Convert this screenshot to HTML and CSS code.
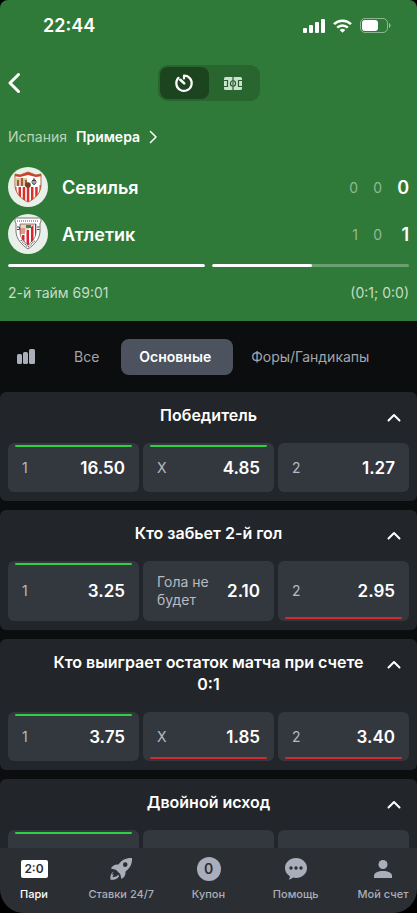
FILE: index.html
```
<!DOCTYPE html>
<html lang="ru">

<head>
    <meta charset="UTF-8">
    <meta name="viewport" content="width=device-width, initial-scale=1.0">
    <title>Севилья - Атлетик</title>
    <link rel="stylesheet" href="styles.css">
</head>

<body>
    <div class="app">
        <header class="match">
            <div class="status">
                <span class="clock">22:44</span>
                <div class="status-icons">
                    <svg width="22" height="14" viewBox="0 0 22 14" fill="#fff">
                        <rect x="0" y="9" width="4" height="5" rx="1" />
                        <rect x="6" y="6" width="4" height="8" rx="1" />
                        <rect x="12" y="3" width="4" height="11" rx="1" />
                        <rect x="18" y="0" width="4" height="14" rx="1" />
                    </svg>
                    <svg width="19" height="14" viewBox="0 0 19 14" fill="none" stroke="#fff" stroke-width="2.5">
                        <path d="M1 5.2a12.2 12.2 0 0 1 17 0" />
                        <path d="M4.2 8.6a7.6 7.6 0 0 1 10.6 0" />
                        <path d="M9.5 13.8L6.7 11a4 4 0 0 1 5.6 0z" fill="#fff" stroke="none" />
                    </svg>
                    <svg width="31" height="15" viewBox="0 0 31 15">
                        <rect x=".5" y=".5" width="27" height="14" rx="4.5" fill="none" stroke="#fff" stroke-opacity=".45" />
                        <rect x="2" y="2" width="16" height="11" rx="3" fill="#fff" />
                        <path d="M29 5c2 .8 2 4.2 0 5z" fill="#fff" fill-opacity=".5" />
                    </svg>
                </div>
            </div>

            <div class="topbar">
                <button class="back" type="button" aria-label="Назад">
                    <svg width="14" height="22" viewBox="0 0 14 22" fill="none" stroke="#fff" stroke-width="3" stroke-linecap="round" stroke-linejoin="round">
                        <path d="M10.500 2.500L2 11l8.500 8.500" />
                    </svg>
                </button>
                <div class="switch">
                    <button class="switch-item active" type="button" aria-label="Счет">
                        <svg width="20" height="20" viewBox="0 0 20 20" fill="none" stroke="#fff" stroke-width="2.2" stroke-linecap="round" stroke-linejoin="round">
                            <path d="M10 5.500V2.500A7.700 7.700 0 1 1 4.500 4.800" />
                            <path d="M6.300 6.800l3.900 3.600" stroke-width="2.6" />
                        </svg>
                    </button>
                    <button class="switch-item" type="button" aria-label="Поле">
                        <svg width="18" height="13" viewBox="0 0 18 13">
                            <rect width="18" height="13" rx="1.5" fill="#cfe0d0" />
                            <g fill="none" stroke="#25602c" stroke-width="1.2">
                                <path d="M9 0v13" />
                                <circle cx="9" cy="6.5" r="2.6" fill="#cfe0d0" />
                                <path d="M9 5v3M0 3.500h3.500v6H0M18 3.500h-3.500v6H18" />
                            </g>
                        </svg>
                    </button>
                </div>
            </div>

            <a class="league" href="#">
                <span class="country">Испания</span>
                <span class="tournament">Примера</span>
                <svg width="8" height="14" viewBox="0 0 8 14" fill="none" stroke="#fff" stroke-width="1.5" stroke-linecap="round" stroke-linejoin="round">
                    <path d="M1.500 1.500L7 7l-5.500 5.500" />
                </svg>
            </a>

            <div class="teams">
                <div class="team">
                    <span class="crest">
                        <svg width="28" height="32" viewBox="0 0 28 32">
                            <defs>
                                <clipPath id="sev">
                                    <path d="M1 3l5 1 8-3 8 3 5-1v11c0 8-6 14-13 17C7 28 1 22 1 14z" />
                                </clipPath>
                            </defs>
                            <g clip-path="url(#sev)">
                                <path d="M0 0h28v32H0z" fill="#fff" />
                                <path d="M0 0h28v5l-6 1-8-2-8 2-6-1z" fill="#d8352b" />
                                <path d="M4.500 16H7v15H4.500zM8.700 16h2.500v15H8.700zM12.800 16h2.500v16h-2.500zM17 16h2.500v15H17zM21.200 16h2.500v12h-2.500zM0 16h2.500v9H0zM25.500 14H28v9h-2.500z" fill="#d9302c" />
                                <path d="M2 7h11v8H2z" fill="#e2c4a0" />
                                <path d="M3 15V9h2v6M7 15V7h2v8M11 15v-6h2v6" fill="#9a5c3c" />
                            </g>
                            <path d="M18 9.500h4M20 7v7m-2-3c0 3 4 3 4 0s-4-3-4 0" fill="none" stroke="#444" />
                            <circle cx="14" cy="14" r="2.8" fill="#75401e" />
                            <path d="M1 3l5 1 8-3 8 3 5-1v11c0 8-6 14-13 17C7 28 1 22 1 14z" fill="none" stroke="#b06a37" />
                        </svg>
                    </span>
                    <span class="name">Севилья</span>
                    <span class="period">0</span>
                    <span class="period">0</span>
                    <span class="total">0</span>
                </div>
                <div class="team">
                    <span class="crest">
                        <svg width="28" height="34" viewBox="0 0 28 34">
                            <defs>
                                <clipPath id="ath">
                                    <path d="M6 7h16v8c0 5-3 9-8 13-5-4-8-8-8-13z" />
                                </clipPath>
                            </defs>
                            <path d="M1 1h26v4l-1 1v8c0 8-6 14-12 18C8 28 2 22 2 14V6L1 5z" fill="#fff" stroke="#555" stroke-width=".8" />
                            <path d="M3 4h22" stroke="#888" stroke-width="1.5" stroke-dasharray="1 1" />
                            <path d="M3 10h2.500v2.500H3m20-2.500h2.500m-2.500 2.500h2.500" fill="none" stroke="#444" />
                            <g clip-path="url(#ath)">
                                <path d="M6 7h16v22H6z" fill="#fff" />
                                <path d="M8 18h2.500v10H8zM12.500 13H15v16h-2.500zM17 8h2.500v18H17zM21 7h1v14h-1z" fill="#d9232e" />
                                <path d="M6 7h15L6 19z" fill="#e8d5c4" />
                                <path d="M6 11h5v6H6z" fill="#dc9b88" />
                                <path d="M12 8h5v3h-5z" fill="#438249" />
                            </g>
                            <path d="M6 7h16v8c0 5-3 9-8 13-5-4-8-8-8-13z" fill="none" stroke="#5a3434" stroke-width=".6" />
                            <path d="M7 23c2 3 4 4 7 7 3-3 5-4 7-7" fill="none" stroke="#666" stroke-width="1.5" stroke-dasharray="1 1" />
                        </svg>
                    </span>
                    <span class="name">Атлетик</span>
                    <span class="period">1</span>
                    <span class="period">0</span>
                    <span class="total">1</span>
                </div>
            </div>

            <div class="halves">
                <div class="half"><div class="half-fill" style="width: 100%"></div></div>
                <div class="half"><div class="half-fill" style="width: 51%"></div></div>
            </div>

            <div class="timing">
                <span>2-й тайм 69:01</span>
                <span>(0:1; 0:0)</span>
            </div>
        </header>

        <nav class="tabs">
            <button class="stats" type="button" aria-label="Статистика">
                <svg width="20" height="16" viewBox="0 0 20 16" fill="#a9aeba">
                    <rect x="1" y="5" width="5" height="10" rx="1.5" />
                    <rect x="7" y="3" width="5" height="12" rx="1.5" />
                    <rect x="13" y="0" width="6" height="15" rx="1.5" />
                </svg>
            </button>
            <button class="tab" type="button">Все</button>
            <button class="tab active" type="button">Основные</button>
            <button class="tab" type="button">Форы/Гандикапы</button>
        </nav>

        <main class="markets">
            <section class="market">
                <div class="market-head">
                    <h2>Победитель</h2>
                    <button class="collapse" type="button" aria-label="Свернуть">
                        <svg width="14" height="9" viewBox="0 0 14 9"><path d="M1.500 7.500L7 2l5.500 5.500" /></svg>
                    </button>
                </div>
                <div class="outcomes">
                    <button class="outcome up" type="button"><span>1</span><b>16.50</b></button>
                    <button class="outcome up" type="button"><span>X</span><b>4.85</b></button>
                    <button class="outcome" type="button"><span>2</span><b>1.27</b></button>
                </div>
            </section>

            <section class="market">
                <div class="market-head">
                    <h2>Кто забьет 2-й гол</h2>
                    <button class="collapse" type="button" aria-label="Свернуть">
                        <svg width="14" height="9" viewBox="0 0 14 9"><path d="M1.500 7.500L7 2l5.500 5.500" /></svg>
                    </button>
                </div>
                <div class="outcomes">
                    <button class="outcome up" type="button"><span>1</span><b>3.25</b></button>
                    <button class="outcome" type="button"><span>Гола не будет</span><b>2.10</b></button>
                    <button class="outcome down" type="button"><span>2</span><b>2.95</b></button>
                </div>
            </section>

            <section class="market">
                <div class="market-head">
                    <h2>Кто выиграет остаток матча при счете 0:1</h2>
                    <button class="collapse" type="button" aria-label="Свернуть">
                        <svg width="14" height="9" viewBox="0 0 14 9"><path d="M1.500 7.500L7 2l5.500 5.500" /></svg>
                    </button>
                </div>
                <div class="outcomes">
                    <button class="outcome up" type="button"><span>1</span><b>3.75</b></button>
                    <button class="outcome down" type="button"><span>X</span><b>1.85</b></button>
                    <button class="outcome down" type="button"><span>2</span><b>3.40</b></button>
                </div>
            </section>

            <section class="market">
                <div class="market-head">
                    <h2>Двойной исход</h2>
                    <button class="collapse" type="button" aria-label="Свернуть">
                        <svg width="14" height="9" viewBox="0 0 14 9"><path d="M1.500 7.500L7 2l5.500 5.500" /></svg>
                    </button>
                </div>
                <div class="outcomes">
                    <button class="outcome up" type="button"></button>
                    <button class="outcome" type="button"></button>
                    <button class="outcome" type="button"></button>
                </div>
            </section>
        </main>

        <nav class="bottom">
            <a class="bottom-item active" href="#">
                <span class="score-icon">2:0</span>
                <span>Пари</span>
            </a>
            <a class="bottom-item" href="#">
                <svg width="24" height="24" viewBox="0 0 24 24" fill="#a9aeba">
                    <path fill-rule="evenodd" d="M23 1c.3 6-1.800 10-6.500 13.500.3 3-.8 5.500-4 7.500l-1.300-5-4.400-4.300-5-1.200c2-3.300 4.500-4.500 7.700-4C13 2.700 17 .7 23 1zm-6.800 4.300a2.300 2.300 0 1 0 .1 4.600 2.300 2.300 0 0 0-.1-4.600z" />
                    <path d="M4.800 14.500l-2.300 3.300 2.300-.6-1.500 3 4-.8 2.200-2 .4 2c-1.400 2.600-4 3.400-8.400 3.300-.5-4 .5-7 3.300-8.200z" />
                </svg>
                <span>Ставки 24/7</span>
            </a>
            <a class="bottom-item" href="#">
                <span class="coupon-icon">0</span>
                <span>Купон</span>
            </a>
            <a class="bottom-item" href="#">
                <svg width="24" height="24" viewBox="0 0 24 24">
                    <path d="M12 1c6.300 0 11 4.500 11 10s-4.700 10-11 10c-1 0-2-.1-3-.4-1 1-2.200 1.800-4.200 2.200.8-1.200 1.100-2.400 1-3.600C2.700 17.300 1 14.500 1 11 1 5.500 5.700 1 12 1z" fill="#a9aeba" />
                    <g fill="#2b2e33">
                        <circle cx="7" cy="11" r="1.7" />
                        <circle cx="12" cy="11" r="1.7" />
                        <circle cx="17" cy="11" r="1.7" />
                    </g>
                </svg>
                <span>Помощь</span>
            </a>
            <a class="bottom-item" href="#">
                <svg width="24" height="24" viewBox="0 0 24 24" fill="#a9aeba">
                    <circle cx="12" cy="7.5" r="4.5" />
                    <path d="M3 21v-2c0-3.500 4-5 9-5s9 1.500 9 5v2z" />
                </svg>
                <span>Мой счет</span>
            </a>
        </nav>
    </div>
</body>

</html>
```
FILE: styles.css
```
* {
    box-sizing: border-box;
}

body {
    margin: 0;
    background-color: #000;
    color: #fff;
    font-family: Inter, "Liberation Sans", sans-serif;
}

button {
    padding: 0;
    border: none;
    background: none;
    color: inherit;
    font: inherit;
    cursor: pointer;
}

a {
    color: inherit;
    text-decoration: none;
}

svg {
    display: block;
    flex: none;
}

.app {
    display: flex;
    flex-direction: column;
    height: 100vh;
    overflow: hidden;
    background-color: #0c0d0f;
    border-radius: 8px 8px 24px 24px;
}

/* match header */
.match {
    flex: none;
    padding: 0 8px 18px;
    background-color: #2f7a38;
}

.status {
    display: flex;
    align-items: center;
    justify-content: space-between;
    height: 51px;
    padding: 0 18px 0 35px;
}

.clock {
    font-size: 18px;
    font-weight: 600;
}

.status-icons {
    display: flex;
    align-items: center;
    gap: 8px;
}

.topbar {
    display: grid;
    grid-template-columns: 1fr auto 1fr;
    align-items: center;
    margin-top: 14px;
}

.back {
    justify-self: start;
}

.switch {
    display: flex;
    padding: 2px;
    border-radius: 10px;
    background-color: #28652f;
}

.switch-item {
    display: flex;
    align-items: center;
    justify-content: center;
    width: 49px;
    height: 32px;
    border-radius: 8px;
}

.switch-item.active {
    background-color: #1b441f;
}

.league {
    display: flex;
    align-items: center;
    gap: 9px;
    margin-top: 26px;
    font-size: 14px;
    line-height: 20px;
}

.country {
    color: #b9d4bb;
}

.tournament {
    font-weight: 600;
}

.teams {
    display: grid;
    gap: 7px;
    margin-top: 20px;
}

.team {
    display: flex;
    align-items: center;
}

.crest {
    display: flex;
    align-items: center;
    justify-content: center;
    width: 40px;
    height: 40px;
    margin-right: 14px;
    border-radius: 50%;
    background-color: #e9f0e9;
}

.name {
    flex: 1;
    font-size: 18px;
    font-weight: 600;
}

.period {
    width: 24px;
    text-align: right;
    font-size: 14px;
    color: #8fb993;
}

.total {
    width: 27px;
    text-align: right;
    font-size: 18px;
    font-weight: 600;
}

.halves {
    display: grid;
    grid-template-columns: 1fr 1fr;
    gap: 7px;
    margin-top: 10px;
}

.half {
    height: 3px;
    border-radius: 2px;
    background-color: #6ba071;
    overflow: hidden;
}

.half-fill {
    height: 100%;
    border-radius: 2px;
    background-color: #fff;
}

.timing {
    display: flex;
    justify-content: space-between;
    margin-top: 16px;
    font-size: 14px;
    line-height: 20px;
    color: #c5dcc7;
}

/* market groups */
.tabs {
    display: flex;
    flex: none;
    align-items: center;
    height: 71px;
    padding-left: 16px;
    font-size: 14px;
    color: #a2a5ab;
    white-space: nowrap;
    overflow: hidden;
}

.stats {
    margin-right: 20px;
}

.tab {
    height: 36px;
    padding: 0 22px 0 18px;
    border-radius: 8px;
}

.tab.active {
    background-color: #4c535f;
    color: #fff;
    font-weight: 600;
}

.markets {
    flex: 1;
    min-height: 0;
    overflow: hidden;
}

.market {
    margin-bottom: 9px;
    padding: 12px 8px 9px;
    border-radius: 6px;
    background-color: #222529;
}

.market-head {
    display: grid;
    grid-template-columns: 30px 1fr 30px;
    align-items: start;
    margin-bottom: 17px;
}

.market-head h2 {
    grid-column: 2;
    margin: 0;
    padding: 0 10px;
    text-align: center;
    font-size: 16px;
    font-weight: 600;
    line-height: 22px;
}

.collapse {
    display: flex;
    align-items: center;
    justify-content: center;
    height: 22px;
    padding-top: 4px;
}

.collapse svg {
    fill: none;
    stroke: #fff;
    stroke-width: 2;
    stroke-linecap: round;
    stroke-linejoin: round;
}

.outcomes {
    display: grid;
    grid-template-columns: repeat(3, 1fr);
    gap: 4px;
}

.outcome {
    position: relative;
    display: flex;
    align-items: center;
    justify-content: space-between;
    min-height: 49px;
    padding: 12px 14px;
    border-radius: 6px;
    background-color: #33373e;
    text-align: left;
}

.outcome span {
    max-width: 60px;
    font-size: 14px;
    line-height: 18px;
    color: #b7bac1;
}

.outcome b {
    font-size: 17px;
    font-weight: 600;
}

/* odds movement line */
.outcome.up::before,
.outcome.down::before {
    content: "";
    position: absolute;
    left: 7px;
    right: 7px;
    height: 2px;
    border-radius: 1px;
}

.outcome.up::before {
    top: 2px;
    background-color: #2fcf46;
}

.outcome.down::before {
    bottom: 2px;
    background-color: #cf2b30;
}

/* bottom menu */
.bottom {
    display: grid;
    flex: none;
    grid-template-columns: repeat(5, 52px);
    justify-content: space-between;
    height: 65px;
    padding: 9px 8px 0;
    background-color: #2b2e33;
}

.bottom-item {
    display: flex;
    flex-direction: column;
    align-items: center;
    gap: 5px;
    font-size: 11px;
    font-weight: 500;
    line-height: 16px;
    color: #a9aeba;
    white-space: nowrap;
}

.bottom-item.active {
    color: #fff;
}

.score-icon {
    width: 27px;
    margin: 3px 0;
    border-radius: 2px;
    background-color: #fff;
    color: #2b2e33;
    text-align: center;
    font-size: 12px;
    font-weight: 600;
    line-height: 18px;
}

.coupon-icon {
    width: 24px;
    border-radius: 50%;
    background-color: #a9aeba;
    color: #2b2e33;
    text-align: center;
    font-size: 14px;
    font-weight: 600;
    line-height: 24px;
}
```
